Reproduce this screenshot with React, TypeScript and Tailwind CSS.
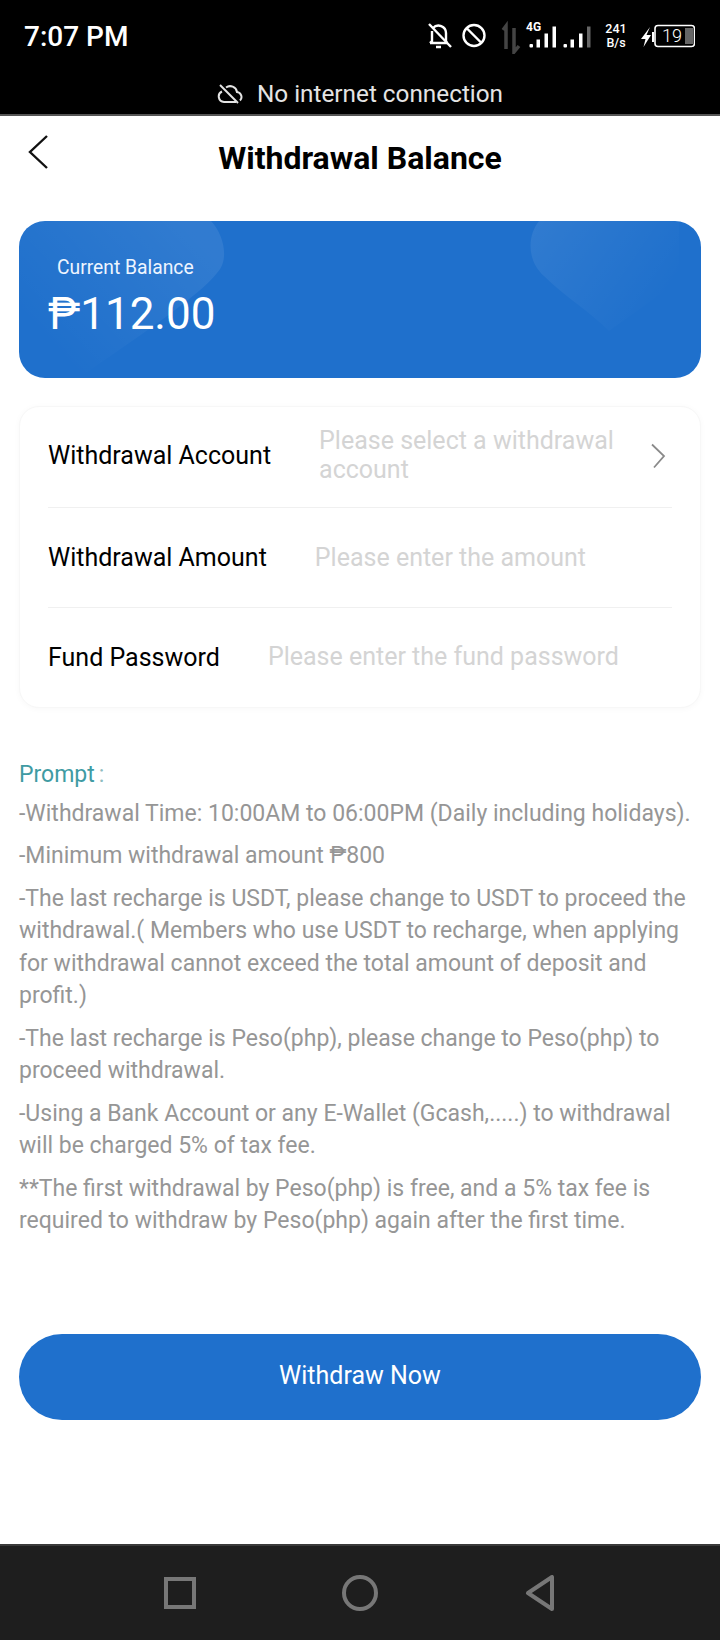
import React from 'react';

const Row = ({ label, hint, hintClass, rowClass, chevron }: { label: string; hint: string; hintClass: string; rowClass: string; chevron?: boolean }) => (
  <div className={`flex items-center border-b border-[#f0f0f0] last:border-b-0 ${rowClass}`}>
    <span className="text-[25px] text-black whitespace-nowrap">{label}</span>
    <span className={`text-[25px] leading-[29px] text-[#d4d4d4] ${hintClass}`}>{hint}</span>
    {chevron && (
      <svg width="16" height="26" viewBox="0 0 16 26" fill="none" className="absolute right-[34px]">
        <path d="M2 1.5 L14 13 L4 24.5" stroke="#8a8a8a" strokeWidth="1.8" />
      </svg>
    )}
  </div>
);

const notes = [
  '-Withdrawal Time: 10:00AM to 06:00PM (Daily including holidays).',
  '-Minimum withdrawal amount ₱800',
  '-The last recharge is USDT, please change to USDT to proceed the withdrawal.( Members who use USDT to recharge, when applying for withdrawal cannot exceed the total amount of deposit and profit.)',
  '-The last recharge is Peso(php), please change to Peso(php) to proceed withdrawal.',
  '-Using a Bank Account or any E-Wallet (Gcash,.....) to withdrawal will be charged 5% of tax fee.',
  '**The first withdrawal by Peso(php) is free, and a 5% tax fee is required to withdraw by Peso(php) again after the first time.',
];

const StatusBar = () => (
  <div className="h-[116px] bg-black border-b-2 border-[#555] text-white flex flex-col shrink-0">
    <div className="flex items-center justify-between h-[74px] pl-[24px] pr-[25px]">
      <span className="text-[28px] font-medium">7:07 PM</span>
      <div className="flex items-center">
        {/* bell off, blocked, data arrows */}
        <svg width="96" height="34" viewBox="0 0 96 34" fill="none" stroke="#fff" strokeWidth="2.4">
          <path d="M4 23 h17 M21 23 l-1 -2 v-8 a7.5 7.5 0 0 0 -13 -5 M6 11 v10 l-2 2 M10 27 h5" />
          <path d="M3 4 L25 27" />
          <circle cx="48" cy="15.5" r="10.5" />
          <path d="M40.5 8 L55.5 23" />
          <path d="M80 29 V6 L77 10 M88 8 V32 L93 26" stroke="#444" strokeWidth="3.5" />
        </svg>
        {/* network */}
        <div className="relative ml-[4px] w-[66px] h-[34px]">
          <span className="absolute left-0 top-[1px] text-[12px] leading-[12px] font-bold">4G</span>
          <svg width="66" height="34" viewBox="0 0 66 34" fill="#fff">
            <rect x="3.5" y="24" width="3.5" height="3.5" rx="1" />
            <rect x="10.5" y="19.5" width="3.5" height="8" />
            <rect x="18.5" y="13.5" width="3.5" height="14" />
            <rect x="26.5" y="6.5" width="3.5" height="21" />
            <rect x="37.5" y="24" width="3.5" height="3.5" rx="1" />
            <rect x="44.5" y="19.5" width="3.5" height="8" />
            <rect x="53" y="13.5" width="3.5" height="14" />
            <rect x="61" y="6.5" width="3.5" height="21" fill="#666" />
          </svg>
        </div>
        <div className="ml-[12px] w-[24px] -mt-[3px] text-center text-[12.5px] leading-[14px] font-medium">
          <div>241</div>
          <div>B/s</div>
        </div>
        {/* battery */}
        <div className="relative ml-[12px] w-[55px] h-[34px]">
          <svg width="55" height="34" viewBox="0 0 55 34" fill="none" stroke="#fff">
            <path d="M10 7 L1 19 H5.5 L3.5 27 L11 15 H6.5 Z" fill="#fff" stroke="none" />
            <rect x="12" y="12" width="2" height="10" fill="#fff" stroke="none" />
            <rect x="15" y="5.5" width="39.5" height="21" rx="3" strokeWidth="1.6" />
            <rect x="45" y="8" width="8" height="16" fill="#666" stroke="none" />
          </svg>
          <span className="absolute left-[22px] top-[5px] text-[18px] leading-[22px] font-light">19</span>
        </div>
      </div>
    </div>
    <div className="flex items-center justify-center gap-[14px] text-[24.3px] text-[#e4e4e4] leading-none mt-[8px]">
      <svg width="26" height="20" viewBox="0 0 26 20" fill="none" stroke="#e4e4e4" strokeWidth="2">
        <path d="M9 3.5 A7 7 0 0 1 20 8 A5 5 0 0 1 23 16.5 M19 18 H7 A5.5 5.5 0 0 1 5 7.5" />
        <path d="M3 1 L21 19" />
      </svg>
      <span>No internet connection</span>
    </div>
  </div>
);

export default function App() {
  return (
    <div className="w-[720px] h-[1640px] flex flex-col bg-white font-['Roboto',sans-serif] overflow-hidden">
      <StatusBar />

      {/* header */}
      <div className="relative h-[84px] flex items-center justify-center shrink-0">
        <svg width="22" height="36" viewBox="0 0 22 36" fill="none" className="absolute left-[27px] top-[18px]">
          <path d="M20 2 L3 18 L20 34" stroke="#111" strokeWidth="2.4" />
        </svg>
        <h1 className="text-[32px] font-bold text-black -mt-[1px]">Withdrawal Balance</h1>
      </div>

      <div className="flex-1 flex flex-col px-[19px] pt-[21px]">
        {/* balance card */}
        <div className="relative h-[157px] rounded-[26px] bg-[#1f70cc] overflow-hidden text-white shrink-0">
          <svg width="682" height="157" viewBox="0 0 682 157" className="absolute inset-0">
            <defs>
              <linearGradient id="waveLeft" x1="0" y1="1" x2="1" y2="0.3">
                <stop offset="0.2" stopColor="#fff" stopOpacity="0" />
                <stop offset="1" stopColor="#fff" stopOpacity="0.08" />
              </linearGradient>
              <linearGradient id="waveRight" x1="0" y1="0" x2="1" y2="0.5">
                <stop offset="0" stopColor="#fff" stopOpacity="0.08" />
                <stop offset="1" stopColor="#fff" stopOpacity="0" />
              </linearGradient>
            </defs>
            <path d="M0 0 H192 C206 15 210 40 198 52 C180 75 120 115 60 157 H0 Z" fill="url(#waveLeft)" />
            <path d="M520 0 C508 15 508 40 525 55 C545 75 570 90 590 110 L660 60 V0 Z" fill="url(#waveRight)" />
          </svg>
          <div className="relative pl-[29px] pt-[36px]">
            <div className="pl-[9px] text-[19.3px] leading-[21px] text-[#eef5ff]">Current Balance</div>
            <div className="text-[44px] leading-[54px] mt-[9px]">₱112.00</div>
          </div>
        </div>

        {/* form */}
        <div className="relative mt-[28px] h-[302px] rounded-[20px] bg-white border border-[#f7f7f7] shadow-[0_1px_6px_rgba(0,0,0,0.03)] px-[28px] shrink-0">
          <Row rowClass="h-[101px] pb-[2px]" label="Withdrawal Account" hint="Please select a withdrawal account" hintClass="ml-[48px] w-[320px] -mt-[3px]" chevron />
          <Row rowClass="h-[100px]" label="Withdrawal Amount" hint="Please enter the amount" hintClass="ml-[48px] -mt-[1px]" />
          <Row rowClass="h-[99px]" label="Fund Password" hint="Please enter the fund password" hintClass="ml-[48px] -mt-[2px]" />
        </div>

        {/* notes */}
        <div className="mt-[51px] text-[23px] leading-[32.5px] text-[#969696]">
          <div className="text-[#3f9ba3] mb-[6px]">
            Prompt<span className="ml-[4px] text-[#8fbcc0]">:</span>
          </div>
          {notes.map((n, i) => (
            <p key={i} className="mb-[10px] whitespace-normal">{n}</p>
          ))}
        </div>

        <button className="mt-[86px] h-[86px] pb-[2px] rounded-full bg-[#1f70cc] text-white text-[25px] shrink-0">Withdraw Now</button>
      </div>

      {/* nav bar */}
      <div className="h-[96px] bg-[#1e1e1e] border-t-2 border-[#3a3a3a] flex items-center justify-center gap-[146px] shrink-0">
        <div className="w-[32px] h-[32px] border-[4px] border-[#777]" />
        <div className="w-[36px] h-[36px] rounded-full border-[4px] border-[#777]" />
        <svg width="32" height="36" viewBox="0 0 32 36" fill="none">
          <path d="M28 2 V34 L4 18 Z" stroke="#777" strokeWidth="4" strokeLinejoin="round" />
        </svg>
      </div>
    </div>
  );
}
